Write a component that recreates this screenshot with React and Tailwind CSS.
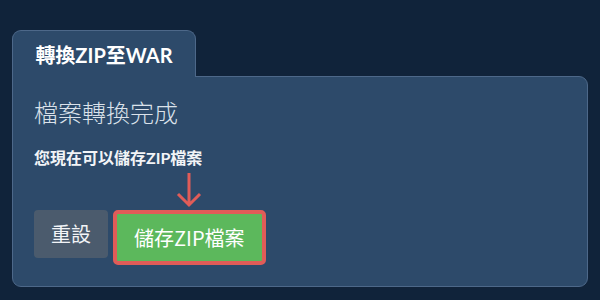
export default function App() {
  const font = { fontFamily: '"Lato", "Noto Sans CJK TC", sans-serif' };
  return (
    <div className="w-[600px] h-[300px] bg-[#10233a] px-[12px] pt-[30px] overflow-hidden" style={font}>
      <div className="relative z-10 -mb-px w-[184px] h-[47px] bg-[#2d4a6a] border border-b-0 border-[#4d6889] rounded-t-[9px] flex items-center justify-center">
        <span className="text-[20px] font-bold text-white leading-none mt-[1px]">轉換ZIP至WAR</span>
      </div>
      <div className="relative w-[576px] h-[211px] bg-[#2d4a6a] border border-[#4d6889] rounded-[9px] rounded-tl-none px-[21px] pt-[19px]">
        <div className="text-[24px] leading-[32px] text-[#dbe2ea]" style={{ fontFamily: '"Noto Sans CJK TC", sans-serif', fontWeight: 300 }}>檔案轉換完成</div>
        <div className="mt-[18px] text-[16px] leading-[24px] font-bold text-[#f2f4f7]">您現在可以儲存ZIP檔案</div>
        <div className="mt-[40px] flex items-start">
          <button className="h-[48px] px-[17px] bg-[#4b5b6d] rounded-[4px] text-[20px] text-[#f2f4f7] leading-none" style={{ fontFamily: '"Noto Sans CJK TC", sans-serif' }}>重設</button>
          <div className="relative ml-[5px]">
            <svg className="absolute left-1/2 -translate-x-1/2 -top-[38px]" width="32" height="36" viewBox="0 0 32 36">
              <path d="M16 1 V33 M5 22 L16 33 L27 22" fill="none" stroke="#e05c58" strokeWidth="3" />
            </svg>
            <button className="h-[55px] px-[17px] bg-[#5cb85c] border-4 border-[#e05c58] rounded-[5px] text-[20px] text-white leading-none" style={{ fontFamily: '"Noto Sans CJK TC", sans-serif' }}>儲存ZIP檔案</button>
          </div>
        </div>
      </div>
    </div>
  );
}
